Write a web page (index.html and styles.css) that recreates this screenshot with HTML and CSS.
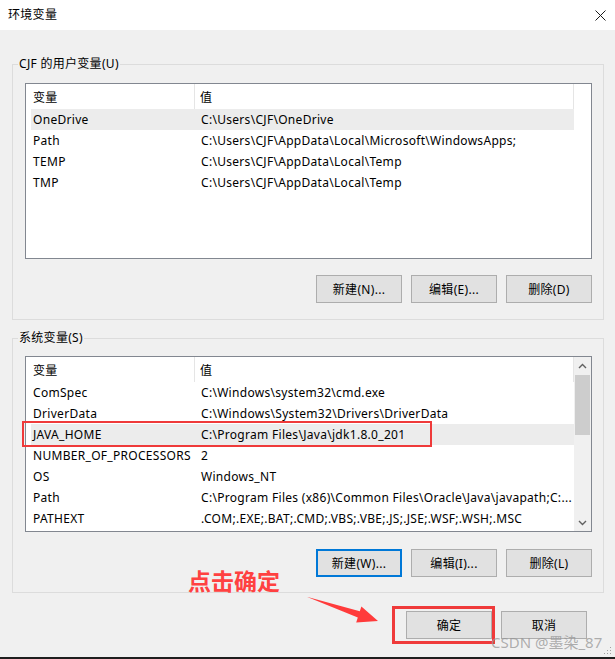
FILE: index.html
```html
<!DOCTYPE html>
<html lang="zh-CN">
<head>
<meta charset="utf-8">
<title>环境变量</title>
<link rel="stylesheet" href="styles.css">
</head>
<body>
<div class="window">
  <div class="titlebar">
    <span class="title">环境变量</span>
    <svg class="close" width="11" height="11" viewBox="0 0 11 11"><path d="M0.5 0.5 L10.5 10.5 M10.5 0.5 L0.5 10.5" stroke="#1a1a1a" stroke-width="1" fill="none"/></svg>
  </div>
  <div class="content">
    <fieldset class="group group-user">
      <legend>CJF 的用户变量(U)</legend>
      <div class="listview">
        <div class="lv-main">
          <div class="lv-header"><div class="c1">变量</div><div class="c2">值</div></div>
          <div class="row sel"><div class="c1">OneDrive</div><div class="c2">C:\Users\CJF\OneDrive</div></div>
          <div class="row"><div class="c1">Path</div><div class="c2">C:\Users\CJF\AppData\Local\Microsoft\WindowsApps;</div></div>
          <div class="row"><div class="c1">TEMP</div><div class="c2">C:\Users\CJF\AppData\Local\Temp</div></div>
          <div class="row"><div class="c1">TMP</div><div class="c2">C:\Users\CJF\AppData\Local\Temp</div></div>
        </div>
        <div class="lv-side"></div>
      </div>
      <div class="btns">
        <button class="btn">新建(N)...</button>
        <button class="btn">编辑(E)...</button>
        <button class="btn">删除(D)</button>
      </div>
    </fieldset>

    <fieldset class="group group-sys">
      <legend>系统变量(S)</legend>
      <div class="listview">
        <div class="lv-main">
          <div class="lv-header"><div class="c1">变量</div><div class="c2">值</div></div>
          <div class="row"><div class="c1">ComSpec</div><div class="c2">C:\Windows\system32\cmd.exe</div></div>
          <div class="row"><div class="c1">DriverData</div><div class="c2">C:\Windows\System32\Drivers\DriverData</div></div>
          <div class="row sel marked"><div class="c1">JAVA_HOME</div><div class="c2">C:\Program Files\Java\jdk1.8.0_201</div><span class="redbox"></span></div>
          <div class="row"><div class="c1">NUMBER_OF_PROCESSORS</div><div class="c2">2</div></div>
          <div class="row"><div class="c1">OS</div><div class="c2">Windows_NT</div></div>
          <div class="row"><div class="c1">Path</div><div class="c2">C:\Program Files (x86)\Common Files\Oracle\Java\javapath;C:...</div></div>
          <div class="row"><div class="c1">PATHEXT</div><div class="c2">.COM;.EXE;.BAT;.CMD;.VBS;.VBE;.JS;.JSE;.WSF;.WSH;.MSC</div></div>
        </div>
        <div class="lv-side scrollbar">
          <div class="sb-arrow"><svg width="9" height="6" viewBox="0 0 9 6"><path d="M1 5 L4.5 1.5 L8 5" stroke="#606060" stroke-width="1.4" fill="none"/></svg></div>
          <div class="sb-track"><div class="sb-thumb"></div></div>
          <div class="sb-arrow"><svg width="9" height="6" viewBox="0 0 9 6"><path d="M1 1 L4.5 4.5 L8 1" stroke="#606060" stroke-width="1.4" fill="none"/></svg></div>
        </div>
      </div>
      <div class="btns">
        <button class="btn focused">新建(W)...</button>
        <button class="btn">编辑(I)...</button>
        <button class="btn">删除(L)</button>
      </div>
    </fieldset>

    <div class="footer">
      <button class="btn ok">确定<span class="redbox-ok"></span></button>
      <button class="btn">取消</button>
    </div>
  </div>

  <div class="note">点击确定</div>
  <svg class="arrow" width="615" height="659" viewBox="0 0 615 659">
    <polygon points="306.7,596.7 359.8,611.2 361.4,606.4 378,621 356.2,622.6 357.8,617.6" fill="#ff3b3b"/>
  </svg>
  <div class="watermark">CSDN @墨染_87</div>
  <svg class="grip" width="10" height="10" viewBox="0 0 10 10">
    <rect x="8" y="2" width="1" height="1" fill="#a0a0a0"/>
    <rect x="5" y="5" width="1" height="1" fill="#a0a0a0"/>
    <rect x="8" y="5" width="1" height="1" fill="#a0a0a0"/>
    <rect x="2" y="8" width="1" height="1" fill="#a0a0a0"/>
    <rect x="5" y="8" width="1" height="1" fill="#a0a0a0"/>
    <rect x="8" y="8" width="1" height="1" fill="#a0a0a0"/>
  </svg>
</div>
</body>
</html>
```

FILE: styles.css
```css
html, body {
  margin: 0;
  padding: 0;
  background: #1e1e1e;
}

body {
  width: 615px;
  height: 659px;
  overflow: hidden;
  font-family: "Noto Sans", "Noto Sans CJK SC", sans-serif;
  font-size: 12px;
  letter-spacing: 0.3px;
  color: #000;
}

.window {
  position: relative;
  width: 615px;
  height: 657px;
  background: #f0f0f0;
}

.titlebar {
  height: 30px;
  background: #fff;
  display: flex;
  align-items: center;
  justify-content: space-between;
  padding: 0 9px 0 8px;
  box-sizing: border-box;
}

.title {
  font-size: 12px;
  line-height: 16px;
}

.close {
  display: block;
}

.content {
  padding: 0 11px 0 12px;
}

.group {
  margin: 0;
  border: 1px solid #dcdcdc;
  padding: 11px 11px 16px 12px;
  min-width: 0;
}

.group-user {
  margin-top: 26px;
}

.group-sys {
  margin-top: 10px;
  padding-top: 10px;
  padding-bottom: 15px;
}

.group legend {
  font-size: 12px;
  line-height: 16px;
  height: 16px;
  padding: 0 1px;
  margin-left: -7px;
}

.listview {
  display: flex;
  height: 176px;
  box-sizing: border-box;
  border: 1px solid #828790;
  background: #fff;
}

.lv-main {
  width: 548px;
  padding-left: 5px;
  box-sizing: border-box;
}

.lv-side {
  width: 17px;
}

.lv-header {
  display: flex;
  height: 25px;
  align-items: stretch;
}

.lv-header .c1 {
  width: 164px;
  border-right: 1px solid #e5e5e5;
  padding-left: 2px;
  box-sizing: border-box;
  display: flex;
  align-items: center;
}

.lv-header .c2 {
  flex: 1;
  border-right: 1px solid #e5e5e5;
  padding-left: 5px;
  display: flex;
  align-items: center;
}

.row {
  display: flex;
  height: 21px;
  align-items: center;
  white-space: nowrap;
}

.row .c1 {
  width: 165px;
  padding-left: 2px;
  box-sizing: border-box;
  overflow: hidden;
}

.row .c2 {
  flex: 1;
  padding-left: 5px;
  overflow: hidden;
}

.row.sel {
  background: #ececec;
}

.marked {
  position: relative;
}

.redbox {
  position: absolute;
  left: -9px;
  top: -3px;
  width: 410px;
  height: 26px;
  border: 2px solid #ef3a3a;
  box-sizing: border-box;
}

.scrollbar {
  background: #f0f0f0;
  display: flex;
  flex-direction: column;
}

.sb-arrow {
  height: 17px;
  display: flex;
  align-items: center;
  justify-content: center;
}

.sb-track {
  flex: 1;
}

.sb-thumb {
  margin-top: 1px;
  height: 60px;
  background: #cdcdcd;
  margin-left: 1px;
  margin-right: 1px;
}

.btns {
  display: flex;
  justify-content: flex-end;
  gap: 9px;
  margin-top: 16px;
}

.group-sys .btns {
  margin-top: 17px;
}

.btn {
  width: 86px;
  height: 28px;
  margin: 0;
  padding: 0;
  background: #e1e1e1;
  border: 1px solid #adadad;
  font-family: "Noto Sans", "Noto Sans CJK SC", sans-serif;
  font-size: 12px;
  letter-spacing: 0.3px;
  color: #000;
  box-sizing: border-box;
}

.btn.focused {
  border: 2px solid #0078d7;
}

.footer {
  display: flex;
  justify-content: flex-end;
  gap: 9px;
  margin-top: 18px;
  padding-right: 17px;
}

.ok {
  position: relative;
}

.redbox-ok {
  position: absolute;
  left: -15px;
  top: -6px;
  width: 103px;
  height: 38px;
  border: 3px solid #ef3a3a;
  box-sizing: border-box;
}

.note {
  position: absolute;
  left: 188px;
  top: 567px;
  font-family: "Noto Sans CJK SC", sans-serif;
  font-size: 23px;
  line-height: 26px;
  font-weight: 700;
  letter-spacing: 0;
  color: #ff4141;
}

.arrow {
  position: absolute;
  left: 0;
  top: 0;
  pointer-events: none;
}

.watermark {
  position: absolute;
  left: 491px;
  top: 632px;
  font-family: "Noto Sans", "Noto Sans CJK SC", sans-serif;
  font-size: 15px;
  line-height: 20px;
  letter-spacing: 0;
  color: rgba(150, 150, 150, 0.75);
  white-space: nowrap;
}

.grip {
  position: absolute;
  right: 3px;
  bottom: 2px;
}
```
